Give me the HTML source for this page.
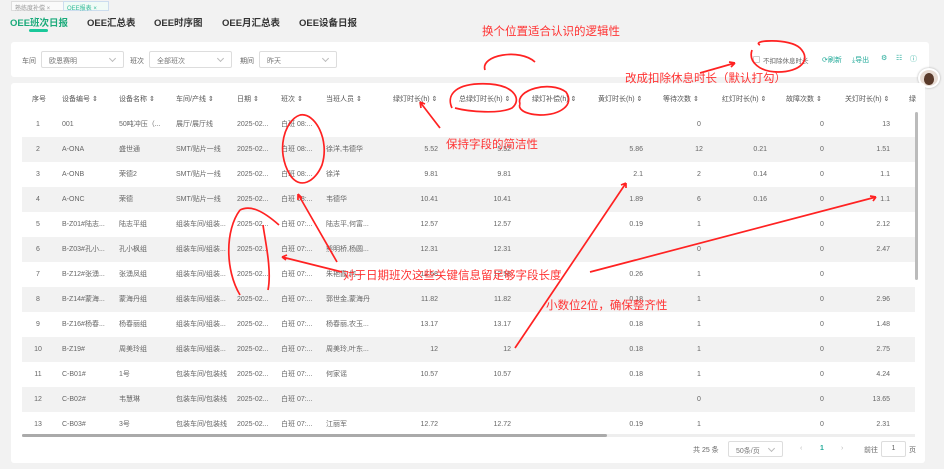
<!DOCTYPE html>
<html><head><meta charset="utf-8"><style>
*{margin:0;padding:0;box-sizing:border-box}
body{width:944px;height:469px;background:#f2f2f2;font-family:"Liberation Sans","Noto Sans CJK SC",sans-serif;position:relative;overflow:hidden;color:#666}
.a{position:absolute;white-space:nowrap}
.tab{font-size:9.5px;font-weight:bold;color:#333;top:15px}
.card{position:absolute;background:#fff;border-radius:3px}
.sel{position:absolute;height:17px;border:1px solid #ddd;border-radius:2px;font-size:7px;color:#777;padding:4px 7px;background:#fff}
.sel:after{content:"";position:absolute;right:8px;top:4px;width:4px;height:4px;border-right:1px solid #bbb;border-bottom:1px solid #bbb;transform:rotate(45deg)}
.row{position:absolute;left:22px;width:893px;height:25px}
.c{position:absolute;font-size:7px;color:#666;line-height:25px;white-space:nowrap}
.h{position:absolute;font-size:7px;color:#555;top:94px;white-space:nowrap}
.red{position:absolute;color:#f33;font-size:11.5px;white-space:nowrap;font-family:"Liberation Sans","Noto Sans CJK SC",sans-serif}
</style></head><body>
<div class="a" style="left:11px;top:1px;height:10px;width:98px;border:1px solid #ddd;background:#fafafa;font-size:6px;color:#999;padding:1px 3px">熟练度补偿 ×</div>
<div class="a" style="left:63px;top:1px;height:10px;width:46px;border:1px solid #cde;background:#f0fbf6;font-size:6px;color:#3b9;padding:1px 3px">OEE报表 ×</div>
<div class="a tab" style="left:10px;color:#1aaa7a">OEE班次日报</div>
<div class="a" style="left:29px;top:29px;width:19px;height:3px;border-radius:2px;background:#1ac89a"></div>
<div class="a tab" style="left:87px">OEE汇总表</div>
<div class="a tab" style="left:154px">OEE时序图</div>
<div class="a tab" style="left:222px">OEE月汇总表</div>
<div class="a tab" style="left:299px">OEE设备日报</div>

<div class="card" style="left:11px;top:42px;width:918px;height:35px"></div>
<div class="a" style="left:22px;top:56px;font-size:7px;color:#666">车间</div>
<div class="sel" style="left:41px;top:51px;width:83px">欧恩赛明</div>
<div class="a" style="left:130px;top:56px;font-size:7px;color:#666">班次</div>
<div class="sel" style="left:149px;top:51px;width:83px">全部班次</div>
<div class="a" style="left:240px;top:56px;font-size:7px;color:#666">期间</div>
<div class="sel" style="left:259px;top:51px;width:78px">昨天</div>
<div class="a" style="left:753px;top:56px;width:7px;height:7px;border:1px solid #ccc;border-radius:1px"></div>
<div class="a" style="left:763px;top:55px;font-size:6.5px;color:#666">不扣除休息时长</div>
<div class="a" style="left:822px;top:55px;font-size:7px;color:#2a9">⟳刷新</div>
<div class="a" style="left:852px;top:55px;font-size:7px;color:#2a9">⤓导出</div>
<div class="a" style="left:881px;top:54px;font-size:7px;color:#2a9">⚙</div>
<div class="a" style="left:896px;top:54px;font-size:7px;color:#2a9">☷</div>
<div class="a" style="left:910px;top:54px;font-size:7px;color:#2a9">ⓘ</div>
<div class="a" style="left:918px;top:68px;width:22px;height:20px;border-radius:50%;background:#e8dcd4;border:2px solid #fff;box-shadow:0 0 2px #aaa"><div style="margin:3px auto;width:10px;height:12px;border-radius:50% 50% 45% 45%;background:#5a3a2a"></div></div>

<div class="card" style="left:11px;top:83px;width:914px;height:380px"></div>
<div class="h" style="left:32px">序号</div>
<div class="h" style="left:62px">设备编号 ⇕</div>
<div class="h" style="left:119px">设备名称 ⇕</div>
<div class="h" style="left:176px">车间/产线 ⇕</div>
<div class="h" style="left:237px">日期 ⇕</div>
<div class="h" style="left:281px">班次 ⇕</div>
<div class="h" style="left:326px">当班人员 ⇕</div>
<div class="h" style="left:393px">绿灯时长(h) ⇕</div>
<div class="h" style="left:459px">总绿灯时长(h) ⇕</div>
<div class="h" style="left:532px">绿灯补偿(h) ⇕</div>
<div class="h" style="left:598px">黄灯时长(h) ⇕</div>
<div class="h" style="left:663px">等待次数 ⇕</div>
<div class="h" style="left:722px">红灯时长(h) ⇕</div>
<div class="h" style="left:786px">故障次数 ⇕</div>
<div class="h" style="left:845px">关灯时长(h) ⇕</div>
<div class="h" style="left:909px">绿</div>
<div id="rows"></div>
<script>
var d=[
["1","001","50吨冲压（...","展厅/展厅线","白班 08:...","","","","","0","","0","13"],
["2","A-ONA","盛世通","SMT/贴片一线","白班 08:...","徐洋,韦德华","5.52","5.52","5.86","12","0.21","0","1.51"],
["3","A-ONB","荣德2","SMT/贴片一线","白班 08:...","徐洋","9.81","9.81","2.1","2","0.14","0","1.1"],
["4","A-ONC","荣德","SMT/贴片一线","白班 08:...","韦德华","10.41","10.41","1.89","6","0.16","0","1.1"],
["5","B-Z01#陆志...","陆志平组","组装车间/组装...","白班 07:...","陆志平,何富...","12.57","12.57","0.19","1","","0","2.12"],
["6","B-Z03#孔小...","孔小枫组","组装车间/组装...","白班 07:...","熊明桥,杨圆...","12.31","12.31","","0","","0","2.47"],
["7","B-Z12#张湧...","张湧凤组","组装车间/组装...","白班 07:...","朱艳霞,何...","12.58","12.58","0.26","1","","0",""],
["8","B-Z14#蒙海...","蒙海丹组","组装车间/组装...","白班 07:...","郭世金,蒙海丹","11.82","11.82","0.18","1","","0","2.96"],
["9","B-Z16#杨春...","杨春丽组","组装车间/组装...","白班 07:...","杨春丽,农玉...","13.17","13.17","0.18","1","","0","1.48"],
["10","B-Z19#","周美玲组","组装车间/组装...","白班 07:...","周美玲,叶东...","12","12","0.18","1","","0","2.75"],
["11","C-B01#","1号","包装车间/包装线","白班 07:...","何家谣","10.57","10.57","0.18","1","","0","4.24"],
["12","C-B02#","韦慧琳","包装车间/包装线","白班 07:...","","","","","0","","0","13.65"],
["13","C-B03#","3号","包装车间/包装线","白班 07:...","江丽军","12.72","12.72","0.19","1","","0","2.31"]];
var h="";
d.forEach(function(r,i){var y=112+i*25;
h+='<div class="row" style="top:'+y+'px;background:'+(i%2?'#f2f2f2':'#fff')+'"></div>';
function c(x,t,al){h+='<div class="c" style="top:'+y+'px;'+(al=='r'?'right:'+(944-x)+'px':al=='m'?'left:'+(x-15)+'px;width:30px;text-align:center':'left:'+x+'px')+'">'+t+'</div>';}
c(38,r[0],'m');c(62,r[1]);c(119,r[2]);c(176,r[3]);c(237,"2025-02...");c(281,r[4]);c(326,r[5]);
c(438,r[6],'r');c(511,r[7],'r');c(643,r[8],'r');c(699,r[9],'m');c(767,r[10],'r');c(822,r[11],'m');c(890,r[12],'r');});
document.getElementById('rows').innerHTML=h;
</script>
<div class="a" style="left:22px;top:434px;width:893px;height:3px;background:#eee"></div>
<div class="a" style="left:22px;top:434px;width:585px;height:3px;border-radius:2px;background:#aaa"></div>
<div class="a" style="left:915px;top:112px;width:3px;height:168px;border-radius:2px;background:#bbb"></div>
<div class="a" style="left:693px;top:445px;font-size:7px;color:#666">共 25 条</div>
<div class="sel" style="left:728px;top:441px;width:55px;height:16px">50条/页</div>
<div class="a" style="left:800px;top:445px;font-size:7px;color:#bbb">‹</div>
<div class="a" style="left:820px;top:445px;font-size:7px;color:#2a9;font-weight:bold">1</div>
<div class="a" style="left:841px;top:445px;font-size:7px;color:#bbb">›</div>
<div class="a" style="left:864px;top:445px;font-size:7px;color:#666">前往</div>
<div class="a" style="left:881px;top:441px;width:25px;height:16px;border:1px solid #ddd;border-radius:2px;font-size:7px;text-align:center;line-height:14px;background:#fff">1</div>
<div class="a" style="left:909px;top:445px;font-size:7px;color:#666">页</div>

<svg class="a" style="left:0;top:0" width="944" height="469" fill="none" stroke="#f22" stroke-width="1.7">
<path d="M760 45 C750 40,790 38,800 48 C812 60,800 72,778 72 C760 72,748 62,752 50"/>
<path d="M700 73 L735 63 M735 63 l-6 -1 M735 63 l-4 4"/>
<path d="M452 108 C446 95,455 82,490 84 C515 86,522 100,512 108 C500 114,470 112,455 108"/>
<path d="M485 70 C480 55,520 48,535 62"/>
<path d="M520 104 C515 90,550 80,566 92 C575 105,560 115,540 115 C522 114,518 108,520 104"/>
<path d="M300 115 C285 120,275 150,290 175 C300 190,315 182,322 165 C330 140,315 112,300 115"/>
<path d="M240 210 C225 230,225 270,240 295 M263 225 C265 240,272 270,268 290 M240 210 C250 205,262 210,279 225"/>
<path d="M298 194 L337 262 M298 194 l0 6 M298 194 l4 4"/>
<path d="M282 257 L342 272 M282 257 l5 -2 M282 257 l4 3"/>
<path d="M440 128 L420 102 M420 102 l1 6 M420 102 l5 2"/>
<path d="M515 348 L626 183 M626 183 l-5 2 M626 183 l0 5"/>
<path d="M590 272 L876 197 M876 197 l-6 -1 M876 197 l-3 4"/>
</svg>
<div class="red" style="left:482px;top:23px">换个位置适合认识的逻辑性</div>
<div class="red" style="left:625px;top:70px">改成扣除休息时长（默认打勾）</div>
<div class="red" style="left:446px;top:136px">保持字段的简洁性</div>
<div class="red" style="left:343px;top:267px">对于日期班次这些关键信息留足够字段长度</div>
<div class="red" style="left:546px;top:297px">小数位2位，确保整齐性</div>
</body></html>
